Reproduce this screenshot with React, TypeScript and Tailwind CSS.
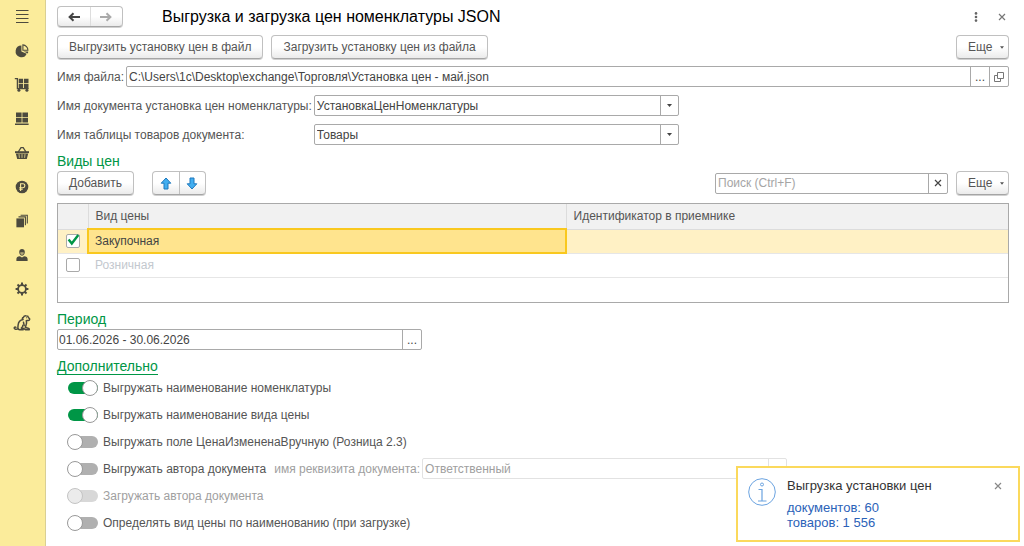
import { useState, type ReactNode } from "react";

type PriceKind = {
  name: string;
  target: string;
  checked: boolean;
};

const initialPrices: PriceKind[] = [
  { name: "Закупочная", target: "", checked: true },
  { name: "Розничная", target: "", checked: false },
];

const button =
  "rounded-sm border border-[#c0c0c0] border-b-[#a5a5a5] bg-linear-to-b from-white from-50% to-[#ebebeb] shadow-[0_1px_0_#d0d0d0] text-[#555]";
const field = "flex h-[21px] rounded-xs border border-[#a9a9a9] bg-white text-[#444]";
const cellButton = "flex w-[19px] shrink-0 items-center justify-center border-l border-[#a9a9a9]";

const sections: { label: string; icon: ReactNode }[] = [
  {
    label: "Главное меню",
    icon: <path d="M2 1.5h12.500M2 5.500h12.500M2 9.500h12.500M2 13.500h12.500" stroke="currentColor" strokeWidth="1.2" />,
  },
  {
    label: "Отчеты",
    icon: (
      <>
        <path d="M7.4 2.600a5.800 5.800 0 1 0 5.300 8.200L7.400 8.400z" />
        <path d="M8.900 1.900a5.200 5.200 0 0 1 5 5.300h-5z" fill="none" stroke="currentColor" strokeWidth="1.100" />
        <path d="M9.600 8.600h4.600c0 .8-.1 1.200-.4 1.900z" />
      </>
    ),
  },
  {
    label: "Закупки",
    icon: (
      <>
        <path d="M.8 1.700h2.600v10h11.300" fill="none" stroke="currentColor" strokeWidth="1.300" />
        <path d="M4.700 1.700H9v4.200H4.700zM9.900 1.700h4.600v4.200H9.900zM4.700 6.700H9v4.200H4.700zM9.900 6.700h4.600v4.200H9.900z" />
        <circle cx="4.900" cy="13.300" r="1.500" />
        <circle cx="12.900" cy="13.300" r="1.500" />
      </>
    ),
  },
  {
    label: "Склад",
    icon: <path d="M2 1.500h5.600v4.700H2zM8.400 1.500H14v4.700H8.400zM2 7h5.600v4.500H2zM8.400 7H14v4.500H8.400zM1 12.600h13.600v1.500H1z" />,
  },
  {
    label: "Продажи",
    icon: (
      <>
        <path d="M4.200 7 7 2.600h2.200L12 7" fill="none" stroke="currentColor" strokeWidth="1.300" />
        <path d="M1 6.200h14v1.900H1z" />
        <path d="M1.800 8.500h12.400l-1.400 5.500H3.200z" />
        <path d="M5 9.100l.4 3.800M8 9.100v3.800M11 9.100l-.4 3.800" stroke="#fbec9b" strokeWidth="0.7" />
      </>
    ),
  },
  {
    label: "Финансы",
    icon: (
      <>
        <circle cx="8" cy="8" r="6.300" />
        <path d="M6.600 12V4.800h2.300a1.900 1.900 0 0 1 0 3.900H5.300M5.300 10.300h3.400" fill="none" stroke="#fbec9b" strokeWidth="1.100" />
      </>
    ),
  },
  {
    label: "Документы",
    icon: (
      <>
        <path d="M2.400 5.400h7.600v8.900H2.400z" />
        <path d="M4.500 3.900h6.900v8.300M6.600 2.200h6.700v8.300" fill="none" stroke="currentColor" strokeWidth="1.100" />
      </>
    ),
  },
  {
    label: "Кадры",
    icon: (
      <>
        <path d="M5.200 4.900C5.200 3 6.300 1.900 8 1.900S10.800 3 10.800 4.900C10.800 7 9.500 8.700 8 8.700S5.200 7 5.200 4.900z" />
        <path d="M2.400 14v-2c0-1.600 1.200-2.400 3.500-2.700L8 10.600l2.100-1.300c2.300.3 3.500 1.100 3.500 2.700v2z" />
        <path d="M6.300 5.300h3.400v.9c0 .9-.7 1.600-1.700 1.600s-1.700-.7-1.700-1.600z" fill="#b5aa76" />
      </>
    ),
  },
  {
    label: "Настройки",
    icon: (
      <g fill="none" stroke="currentColor">
        <circle cx="8" cy="8" r="3.900" strokeWidth="1.800" />
        <path
          d="M8 1.600v2.400M8 12v2.400M1.600 8H4M12 8h2.400M3.500 3.500l1.600 1.600M10.900 10.900l1.600 1.600M12.500 3.500l-1.600 1.600M5.100 10.900l-1.600 1.600"
          strokeWidth="2"
        />
      </g>
    ),
  },
];

function ChevronDown({ className = "h-[3px] w-[5px]" }: { className?: string }) {
  return (
    <svg viewBox="0 0 5 3" className={className} fill="currentColor" aria-hidden="true">
      <path d="M0 0h5L2.5 3z" />
    </svg>
  );
}

function Cross() {
  return (
    <svg viewBox="0 0 8 8" className="size-2" stroke="currentColor" strokeWidth="1.2" aria-hidden="true">
      <path d="M1 1l6 6M7 1L1 7" />
    </svg>
  );
}

function HistoryArrow({ flip = false }: { flip?: boolean }) {
  return (
    <svg viewBox="0 0 12 10" className={`h-[10px] w-3 ${flip ? "-scale-x-100" : ""}`} fill="none" stroke="currentColor" strokeWidth="2" aria-hidden="true">
      <path d="M12 5H2M5.500 1.200L1.600 5l3.900 3.800" />
    </svg>
  );
}

function MoveArrow({ down = false }: { down?: boolean }) {
  return (
    <svg viewBox="0 0 12 13" className={`h-[13px] w-3 ${down ? "rotate-180" : ""}`} aria-hidden="true">
      <path d="M6 1l4.800 5.200H8V12H4V6.200H1.200z" fill="#42aef0" stroke="#1f78bd" strokeWidth="1" strokeLinejoin="round" />
    </svg>
  );
}

function MonkeyIcon() {
  return (
    <svg viewBox="0 0 18 18" className="size-[18px]" fill="none" stroke="currentColor" strokeWidth="1.5" strokeLinecap="round" strokeLinejoin="round" aria-hidden="true">
      <path d="M10.300 3.600c.4-1.300 1.500-2 2.900-1.900 1.200 0 2 .7 2.200 1.700l1.200 1.300c.3 1-.4 1.700-1.500 1.700h-1.500" />
      <path d="M10.300 3.600c-1.200.2-1.300 1.700-.2 2-2.600.5-4.700 2.600-5 5.400l-.2 2.300c-.2 1.300.6 2.400 1.900 2.400h3.400c0-1.100-.8-1.500-1.900-1.500.9-.7 1.600-1.700 1.600-2.900" />
      <path d="M13.300 6.700c.5 1.600.4 3-.3 4.500l-.7 2.300 2.900.7c.9.200 1.200.8 1.100 1.500h-3.900l-1.900-1.300M10.500 8.300l.7 3.300" />
      <path d="M4.800 14.900c-1.400.7-3.400.3-3.600-.8-.1-.9.900-1.300 1.700-.8" />
      <path d="M13.500 3.700h.1" strokeWidth="1.100" />
    </svg>
  );
}

function MoreButton() {
  return (
    <button className={`${button} flex h-6 w-[53px] items-center gap-2 pl-[11px]`}>
      Еще <ChevronDown className="h-[3px] w-1 shrink-0" />
    </button>
  );
}

function SelectField({ id, value, disabled = false }: { id: string; value: string; disabled?: boolean }) {
  return (
    <div className={`relative w-[365px] ${disabled ? "text-[#a0a0a0]" : "text-[#444]"}`}>
      <select
        id={id}
        disabled={disabled}
        defaultValue={value}
        className={`block h-[21px] w-full appearance-none rounded-xs border bg-white pr-5 pl-0.5 opacity-100 ${disabled ? "border-[#e2e2e2]" : "border-[#a9a9a9]"}`}
      >
        <option>{value}</option>
      </select>
      <span
        className={`pointer-events-none absolute inset-y-0 right-0 flex w-[19px] items-center justify-center border-l ${disabled ? "border-[#e2e2e2] text-transparent" : "border-[#a9a9a9]"}`}
      >
        <ChevronDown />
      </span>
    </div>
  );
}

type SwitchProps = {
  label: string;
  on?: boolean;
  disabled?: boolean;
  children?: ReactNode;
};

function SwitchRow({ label, on = false, disabled = false, children }: SwitchProps) {
  return (
    <div className="flex h-[21px] items-center">
      <label className={`flex items-center gap-[5px] ${disabled ? "text-[#a0a0a0]" : ""}`}>
        <input
          type="checkbox"
          role="switch"
          defaultChecked={on}
          disabled={disabled}
          className="relative h-3 w-[30px] appearance-none rounded-full bg-[#b0b0b0] before:absolute before:-top-0.5 before:-left-px before:size-4 before:rounded-full before:border before:border-[#999] before:bg-white checked:bg-[#009646] checked:before:left-[14px] disabled:bg-[#d8d8d8] disabled:before:border-[#c4c4c4] disabled:before:bg-[#ebebeb]"
        />
        {label}
      </label>
      {children}
    </div>
  );
}

function PriceTable() {
  const [prices, setPrices] = useState(initialPrices);

  const toggle = (index: number) => {
    setPrices((prev) => prev.map((p, i) => (i === index ? { ...p, checked: !p.checked } : p)));
  };

  return (
    <div className="mt-2 min-h-[100px] border border-[#a9a9a9]">
      <table className="w-full table-fixed border-collapse text-left">
        <thead>
          <tr className="h-[25px] border-b border-[#dcdcdc] bg-[#f1f1f1]">
            <th className="w-[30px] border-r border-[#dcdcdc]" aria-label="Отметка" />
            <th className="w-[478px] border-r border-[#dcdcdc] px-[7px] font-normal">Вид цены</th>
            <th className="px-[7px] font-normal">Идентификатор в приемнике</th>
          </tr>
        </thead>
        <tbody>
          {prices.map((price, i) => (
            <tr key={price.name} className={`h-6 border-b border-[#e6e6e6] ${i === 0 ? "bg-[#fff1c5]" : ""}`}>
              <td>
                <div className="flex justify-center">
                  <div className="relative size-[14px]">
                    <input
                      type="checkbox"
                      aria-label={price.name}
                      checked={price.checked}
                      onChange={() => toggle(i)}
                      className="block size-[14px] appearance-none rounded-xs border border-[#a9a9a9] bg-white"
                    />
                    {price.checked && (
                      <svg viewBox="0 0 14 14" className="pointer-events-none absolute inset-0" fill="none" stroke="#009646" strokeWidth="2.4" aria-hidden="true">
                        <path d="M2.600 5.500l3.200 4L12.300 1" />
                      </svg>
                    )}
                  </div>
                </div>
              </td>
              <td className={i === 0 ? "border-2 border-[#f9c81e] bg-[#ffe48e] px-1.5 text-[#444]" : "px-[7px] text-[#c3c8ce]"}>
                {price.name}
              </td>
              <td className="px-[7px]">{price.target}</td>
            </tr>
          ))}
        </tbody>
      </table>
    </div>
  );
}

function Notification() {
  return (
    <div role="status" className="fixed right-1 bottom-1 flex h-[76px] w-[284px] border-2 border-[#fbd95c] bg-white pt-2.5 pr-4 pl-2.5">
      <svg viewBox="0 0 28 28" className="size-7 shrink-0" fill="none" stroke="#6ba3e0" aria-hidden="true">
        <circle cx="14" cy="14" r="13.3" />
        <circle cx="14" cy="6.500" r="1.500" />
        <path d="M10.500 11.500H14v11.500M10 23h8.500" strokeWidth="1.2" />
      </svg>
      <div className="ml-[11px] flex-1">
        <p className="text-[13px] leading-4 text-[#333]">Выгрузка установки цен</p>
        <a href="#result" className="mt-1.5 block text-[13px] leading-[15px] text-[#2b62b8]">
          документов: 60
          <br />
          товаров: 1 556
        </a>
      </div>
      <button aria-label="Закрыть уведомление" className="mt-1 flex size-2 text-[#888]">
        <Cross />
      </button>
    </div>
  );
}

export default function App() {
  return (
    <div className="flex min-h-screen bg-white font-['Liberation_Sans',Arial,sans-serif] text-[12px] leading-4 text-[#555]">
      <nav className="flex w-[46px] shrink-0 flex-col items-center border-r border-[#d9cf94] bg-[#fbec9b] pr-px text-[#4c4a3e]">
        {sections.map((section) => (
          <button key={section.label} aria-label={section.label} className="flex h-[34px] w-full items-center justify-center">
            <svg viewBox="0 0 16 16" className="size-4" fill="currentColor" aria-hidden="true">
              {section.icon}
            </svg>
          </button>
        ))}
        <button aria-label="Обезьяна" className="flex h-[34px] w-full items-center justify-center">
          <MonkeyIcon />
        </button>
      </nav>

      <main className="min-w-0 flex-1 pr-[15px] pl-[11px]">
        <header className="flex items-center pt-1.5">
          <div className={`${button} flex h-[21px] w-[66px]`}>
            <button aria-label="Назад" className="flex flex-1 items-center justify-center text-[#444]">
              <HistoryArrow />
            </button>
            <button aria-label="Вперед" className="flex flex-1 items-center justify-center border-l border-[#ddd] text-[#aaa]">
              <HistoryArrow flip />
            </button>
          </div>
          <h1 className="ml-[39px] flex-1 text-[16px] leading-5 text-black">Выгрузка и загрузка цен номенклатуры JSON</h1>
          <button aria-label="Действия" className="mr-5 text-[#666]">
            <svg viewBox="0 0 4 10" className="h-[10px] w-1" fill="currentColor" aria-hidden="true">
              <circle cx="2" cy="1.4" r="1.3" />
              <circle cx="2" cy="5" r="1.3" />
              <circle cx="2" cy="8.6" r="1.3" />
            </svg>
          </button>
          <button aria-label="Закрыть" className="mr-[3px] text-[#777]">
            <Cross />
          </button>
        </header>

        <div className="mt-2 flex gap-2">
          <button className={`${button} h-6 px-[11px]`}>Выгрузить установку цен в файл</button>
          <button className={`${button} h-6 px-[11px]`}>Загрузить установку цен из файла</button>
          <div className="ml-auto">
            <MoreButton />
          </div>
        </div>

        <div className="mt-[7px] flex items-center gap-0.5">
          <label htmlFor="file">Имя файла:</label>
          <div className={`${field} flex-1`}>
            <input
              id="file"
              defaultValue="C:\Users\1c\Desktop\exchange\Торговля\Установка цен - май.json"
              className="min-w-0 flex-1 px-0.5 outline-none"
            />
            <button aria-label="Выбрать файл" className={cellButton}>
              ...
            </button>
            <button aria-label="Открыть файл" className={cellButton}>
              <svg viewBox="0 0 10 10" className="size-[10px]" fill="none" stroke="#777" aria-hidden="true">
                <path d="M3.500.5h6v6h-6z" />
                <path d="M3.500 3.500h-3v6h6v-3" />
              </svg>
            </button>
          </div>
        </div>

        <div className="mt-2 grid grid-cols-[auto_1fr] items-center gap-x-0.5 gap-y-2">
          <label htmlFor="document">Имя документа установка цен номенклатуры:</label>
          <SelectField id="document" value="УстановкаЦенНоменклатуры" />
          <label htmlFor="goods">Имя таблицы товаров документа:</label>
          <SelectField id="goods" value="Товары" />
        </div>

        <section>
          <h2 className="mt-2 text-[14px] leading-4 text-[#009646]">Виды цен</h2>
          <div className="mt-0.5 flex items-center">
            <button className={`${button} h-6 px-[11px]`}>Добавить</button>
            <div className={`${button} ml-[18px] flex h-6 w-[54px]`}>
              <button aria-label="Переместить вверх" className="flex flex-1 items-center justify-center">
                <MoveArrow />
              </button>
              <button aria-label="Переместить вниз" className="flex flex-1 items-center justify-center border-l border-[#c0c0c0]">
                <MoveArrow down />
              </button>
            </div>
            <div className={`${field} ml-auto w-[233px]`}>
              <input
                type="text"
                aria-label="Поиск"
                placeholder="Поиск (Ctrl+F)"
                className="min-w-0 flex-1 px-0.5 outline-none placeholder:text-[#a5a5a5]"
              />
              <button aria-label="Очистить поиск" className={cellButton}>
                <Cross />
              </button>
            </div>
            <div className="ml-2">
              <MoreButton />
            </div>
          </div>
          <PriceTable />
        </section>

        <section>
          <h2 className="mt-2 text-[14px] leading-4 text-[#009646]">Период</h2>
          <div className={`${field} mt-0.5 w-[365px]`}>
            <input aria-label="Период" defaultValue="01.06.2026 - 30.06.2026" className="min-w-0 flex-1 px-px outline-none" />
            <button aria-label="Выбрать период" className={cellButton}>
              ...
            </button>
          </div>
        </section>

        <section>
          <h2 className="mt-2 text-[14px] leading-4 text-[#009646]">
            <button className="border-b border-[#009646]">Дополнительно</button>
          </h2>
          <div className="flex flex-col gap-1.5 pt-0.5 pl-[11px]">
            <SwitchRow label="Выгружать наименование номенклатуры" on />
            <SwitchRow label="Выгружать наименование вида цены" on />
            <SwitchRow label="Выгружать поле ЦенаИзмененаВручную (Розница 2.3)" />
            <SwitchRow label="Выгружать автора документа">
              <label htmlFor="author" className="mr-0.5 ml-2 text-[#a0a0a0]">
                имя реквизита документа:
              </label>
              <SelectField id="author" value="Ответственный" disabled />
            </SwitchRow>
            <SwitchRow label="Загружать автора документа" disabled />
            <SwitchRow label="Определять вид цены по наименованию (при загрузке)" />
          </div>
        </section>
      </main>

      <Notification />
    </div>
  );
}
